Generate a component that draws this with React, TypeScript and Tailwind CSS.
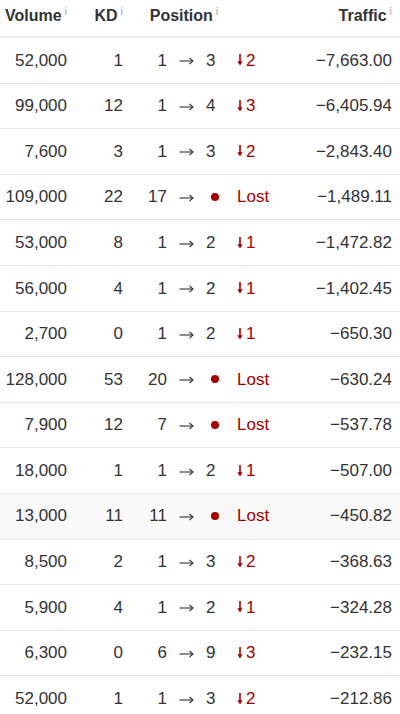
type Row = {
  volume: string
  kd: string
  from: string
  to: string | null
  change: string | null
  traffic: string
  highlight?: boolean
}

const rows: Row[] = [
  { volume: '52,000', kd: '1', from: '1', to: '3', change: '2', traffic: '−7,663.00' },
  { volume: '99,000', kd: '12', from: '1', to: '4', change: '3', traffic: '−6,405.94' },
  { volume: '7,600', kd: '3', from: '1', to: '3', change: '2', traffic: '−2,843.40' },
  { volume: '109,000', kd: '22', from: '17', to: null, change: null, traffic: '−1,489.11' },
  { volume: '53,000', kd: '8', from: '1', to: '2', change: '1', traffic: '−1,472.82' },
  { volume: '56,000', kd: '4', from: '1', to: '2', change: '1', traffic: '−1,402.45' },
  { volume: '2,700', kd: '0', from: '1', to: '2', change: '1', traffic: '−650.30' },
  { volume: '128,000', kd: '53', from: '20', to: null, change: null, traffic: '−630.24' },
  { volume: '7,900', kd: '12', from: '7', to: null, change: null, traffic: '−537.78' },
  { volume: '18,000', kd: '1', from: '1', to: '2', change: '1', traffic: '−507.00' },
  { volume: '13,000', kd: '11', from: '11', to: null, change: null, traffic: '−450.82', highlight: true },
  { volume: '8,500', kd: '2', from: '1', to: '3', change: '2', traffic: '−368.63' },
  { volume: '5,900', kd: '4', from: '1', to: '2', change: '1', traffic: '−324.28' },
  { volume: '6,300', kd: '0', from: '6', to: '9', change: '3', traffic: '−232.15' },
  { volume: '52,000', kd: '1', from: '1', to: '3', change: '2', traffic: '−212.86' },
]

function Info() {
  return <sup className="ml-[3px] -top-[6px] text-[11px] font-normal text-[#aaaaaa]">i</sup>
}

function DownArrow() {
  return (
    <svg width="6" height="12" viewBox="0 0 6 12" className="mr-[3px] inline-block">
      <path d="M3 0V9" stroke="#a50000" strokeWidth="1.6" />
      <path d="M0.4 7.2L3 11.6L5.6 7.2Z" fill="#a50000" />
    </svg>
  )
}

function RightArrow() {
  return (
    <svg width="15" height="8" viewBox="0 0 15 8" className="mx-auto block">
      <path d="M0.5 4H14" stroke="#333333" strokeWidth="1.1" />
      <path d="M10.5 1L14 4L10.5 7" stroke="#333333" strokeWidth="1.1" fill="none" />
    </svg>
  )
}

export default function App() {
  return (
    <div className="w-[400px] bg-white font-['Liberation_Sans',Arial,sans-serif] text-[#333333]">
      <div className="flex h-[38px] items-start border-b-2 border-[#e8e8e8] pt-[4px] text-[16px] font-bold">
        <div className="w-[75px] pr-2 text-right">Volume<Info /></div>
        <div className="w-[56px] pr-2 text-right">KD<Info /></div>
        <div className="w-[106px] text-center">Position<Info /></div>
        <div className="flex-1 pr-2 text-right">Traffic<Info /></div>
      </div>
      {rows.map((r, i) => (
        <div
          key={i}
          className={`flex h-[45.6px] items-center border-b border-[#e8e8e8] text-[17px] ${r.highlight ? 'bg-[#f9f9f9]' : ''}`}
        >
          <div className="w-[75px] pr-2 text-right">{r.volume}</div>
          <div className="w-[56px] pr-2 text-right">{r.kd}</div>
          <div className="flex w-[106px] items-center">
            <span className="w-[36px] text-right">{r.from}</span>
            <span className="w-[39px] pt-[2px]">
              <RightArrow />
            </span>
            {r.to ? (
              <span>{r.to}</span>
            ) : (
              <span className="ml-[5px] inline-block h-[8px] w-[8px] rounded-full bg-[#a50000]" />
            )}
          </div>
          <div className="flex w-[70px] items-center text-[#a50000]">
            {r.change ? (
              <>
                <DownArrow />
                <span>{r.change}</span>
              </>
            ) : (
              <span>Lost</span>
            )}
          </div>
          <div className="flex-1 pr-2 text-right">{r.traffic}</div>
        </div>
      ))}
    </div>
  )
}
